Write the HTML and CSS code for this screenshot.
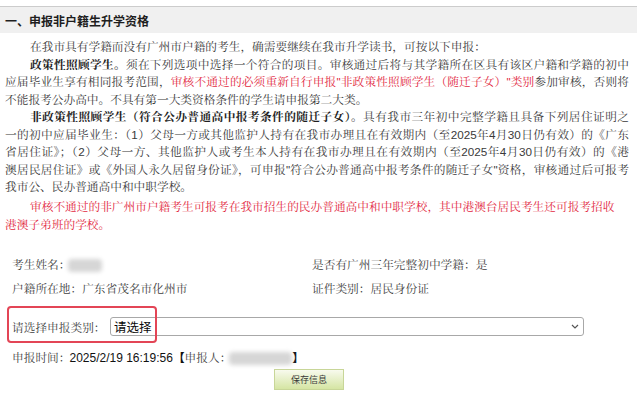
FILE: index.html
```html
<!DOCTYPE html>
<html lang="zh-CN">
<head>
<meta charset="utf-8">
<title>申报非户籍生升学资格</title>
<link rel="stylesheet" href="styles.css">
</head>
<body>
<div class="hd">一、申报非户籍生升学资格</div>
<div class="intro">
  <p class="para"><span class="ln ind">在我市具有学籍而没有广州市户籍的考生，确需要继续在我市升学读书，可按以下申报：</span></p>
  <p class="para">
    <span class="ln ind full"><b>政策性照顾学生。</b>须在下列选项中选择一个符合的项目。审核通过后将与其学籍所在区具有该区户籍和学籍的初中</span>
    <span class="ln full">应届毕业生享有相同报考范围，<span class="red">审核不通过的必须重新自行申报"非政策性照顾学生（随迁子女）"类别</span>参加审核，否则将</span>
    <span class="ln">不能报考公办高中。不具有第一大类资格条件的学生请申报第二大类。</span>
  </p>
  <p class="para">
    <span class="ln ind full"><b>非政策性照顾学生（符合公办普通高中报考条件的随迁子女）</b>。具有我市三年初中完整学籍且具备下列居住证明之</span>
    <span class="ln full">一的初中应届毕业生：（1）父母一方或其他监护人持有在我市办理且在有效期内（至2025年4月30日仍有效）的《广东</span>
    <span class="ln full">省居住证》；（2）父母一方、其他监护人或考生本人持有在我市办理且在有效期内（至2025年4月30日仍有效）的《港</span>
    <span class="ln full">澳居民居住证》或《外国人永久居留身份证》，可申报"符合公办普通高中报考条件的随迁子女"资格，审核通过后可报考</span>
    <span class="ln">我市公、民办普通高中和中职学校。</span>
  </p>
  <p class="para red notice">
    <span class="ln ind">审核不通过的非广州市户籍考生可报考在我市招生的民办普通高中和中职学校，其中港澳台居民考生还可报考招收</span>
    <span class="ln">港澳子弟班的学校。</span>
  </p>
</div>

<div class="info">
  <div class="row">
    <span>考生姓名：<span class="blur name"></span></span>
    <span>是否有广州三年完整初中学籍：是</span>
  </div>
  <div class="row">
    <span>户籍所在地：广东省茂名市化州市</span>
    <span>证件类别：居民身份证</span>
  </div>
  <div class="pick">
    <span class="lbl">请选择申报类别：</span>
    <div class="sel">
      <span>请选择</span>
      <svg class="chev" width="8" height="5" viewBox="0 0 8 5"><polyline points="1,1 4,4 7,1" fill="none" stroke="#555" stroke-width="1.2"/></svg>
    </div>
    <span class="mark"></span>
  </div>
  <div class="time">申报时间：<span class="num">2025/2/19 16:19:56</span><span class="brk">【</span>申报人：<span class="blur who"></span><span class="brk">】</span></div>
  <div class="actions"><button class="save" type="button">保存信息</button></div>
</div>
</body>
</html>
```

FILE: styles.css
```css
html, body {
  margin: 0;
  padding: 0;
  background: #ffffff;
}

body {
  font-family: "Liberation Sans", "Noto Serif CJK SC", "Noto Sans CJK SC", sans-serif;
  color: #3a3a3a;
}

.hd {
  margin-top: 6px;
  border-top: 1px solid #cccccc;
  background: #f0f0f0;
  height: 24px;
  padding: 2px 0 0 5px;
  line-height: 24px;
  font-family: "Noto Sans CJK SC", sans-serif;
  font-weight: bold;
  font-size: 12px;
  color: #1e1e1e;
}

.intro {
  width: 624px;
  padding: 5px 0 0 5px;
  font-size: 11.7px;
  line-height: 17.5px;
}

.para {
  margin: 0;
}

.ln {
  display: block;
  text-align: left;
  white-space: nowrap;
}

.ln.full {
  text-align: justify;
  text-align-last: justify;
  text-justify: inter-character;
}

.ln.ind {
  padding-left: 25px;
}

.intro b {
  color: #1e1e1e;
}

.red {
  color: #e2283e;
}

.notice {
  margin-top: 2.5px;
}

.info {
  margin: 20px 0 0 5px;
  width: 624px;
  font-size: 11.7px;
  color: #3f3f3f;
}

.row {
  display: grid;
  grid-template-columns: 300px 1fr;
  padding-left: 7px;
  line-height: 24px;
  height: 24px;
}

.blur {
  display: inline-block;
  background: #d6d6d6;
  border-radius: 4px;
  filter: blur(2px);
  vertical-align: middle;
}

.name {
  width: 34px;
  height: 13px;
  margin-left: -2px;
}

.pick {
  position: relative;
  margin-top: 16px;
  padding-left: 7px;
  height: 19px;
  display: flex;
  align-items: center;
}

.lbl {
  width: 98px;
  flex: none;
}

.sel {
  box-sizing: border-box;
  width: 474px;
  height: 19px;
  border: 1px solid #a8a8a8;
  border-radius: 3px;
  background: #ffffff;
  display: flex;
  align-items: center;
  justify-content: space-between;
  padding: 0 4px 0 3px;
  font-family: "Noto Sans CJK SC", sans-serif;
  font-size: 12.5px;
  color: #0a0a0a;
}

.chev {
  display: block;
}

.mark {
  position: absolute;
  left: 2px;
  top: -11px;
  width: 150px;
  height: 37px;
  box-sizing: border-box;
  border: 2px solid #e34556;
  border-radius: 4px;
  pointer-events: none;
}

.time {
  margin-top: 11px;
  padding-left: 7px;
  line-height: 20px;
  height: 20px;
  white-space: nowrap;
}

.num {
  font-family: "Liberation Sans", sans-serif;
  font-size: 12px;
  color: #111111;
  margin-left: -1px;
}

.brk {
  font-weight: bold;
  color: #111111;
  font-family: "Noto Sans CJK SC", sans-serif;
}

.who {
  width: 63px;
  height: 13px;
  margin-left: -2px;
}

.actions {
  margin-top: 2px;
  padding-left: 269px;
}

.save {
  display: block;
  width: 70px;
  height: 21px;
  margin: 0;
  padding: 0;
  border: 1px solid #c8d698;
  background: linear-gradient(#f8faee, #d5e5a3);
  font-family: "Noto Sans CJK SC", sans-serif;
  font-size: 9px;
  color: #3a3a3a;
}
```
